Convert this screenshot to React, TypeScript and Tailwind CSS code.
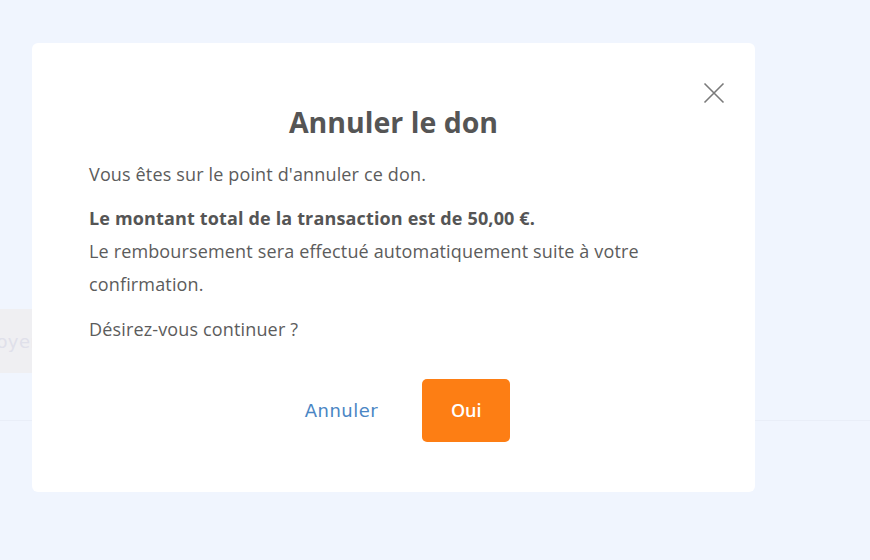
import React from 'react';

const body = { fontFamily: '"Open Sans", "Noto Sans", sans-serif' };
const btn = { fontFamily: '"DejaVu Sans", Verdana, sans-serif' };

const CloseIcon = () => (
  <svg width="22" height="22" viewBox="0 0 22 22" fill="none" stroke="#7a7a7a" strokeWidth="1.6">
    <path d="M1.5 1.5 L20.5 20.5 M20.5 1.5 L1.5 20.5" />
  </svg>
);

export default function App() {
  return (
    <div className="relative w-[870px] h-[560px] overflow-hidden bg-[#f0f5fe]" style={body}>
      {/* page behind the dialog */}
      <div className="pt-[309px]">
        <div className="ml-[-90px] w-[180px] h-[64px] bg-[#efeff2] flex items-center justify-center text-[18px] text-[#dfe0ea] tracking-wide" style={btn}>
          Envoyer
        </div>
        <div className="mt-[47px] border-t border-[#e9eef8]" />
      </div>

      {/* dialog */}
      <div className="absolute left-[32px] top-[43px] w-[723px] h-[449px] bg-white rounded-[6px] px-[57px] pt-[60px] text-[#5c5c5c]">
        <button className="absolute right-[30px] top-[39px]">
          <CloseIcon />
        </button>
        <h2 className="text-center text-[28.5px] font-bold text-[#555555] leading-[38px]">Annuler le don</h2>
        <div className="text-[18px] leading-[33px] tracking-[0.15px]">
          <p className="mt-[17px]">Vous êtes sur le point d'annuler ce don.</p>
          <p className="mt-[11px]">
            <strong className="font-bold text-[#555555]">Le montant total de la transaction est de 50,00 €.</strong>
            <br />
            Le remboursement sera effectué automatiquement suite à votre confirmation.
          </p>
          <p className="mt-[12px]">Désirez-vous continuer ?</p>
        </div>
        <div className="mt-[33px] flex justify-center items-center gap-[44px] pl-[28px]">
          <button className="text-[18px] text-[#4a86c4] tracking-[0.5px]" style={btn}>Annuler</button>
          <button className="w-[88px] h-[63px] rounded-[5px] bg-[#fd7e14] text-white text-[18px] font-semibold" style={body}>Oui</button>
        </div>
      </div>
    </div>
  );
}
